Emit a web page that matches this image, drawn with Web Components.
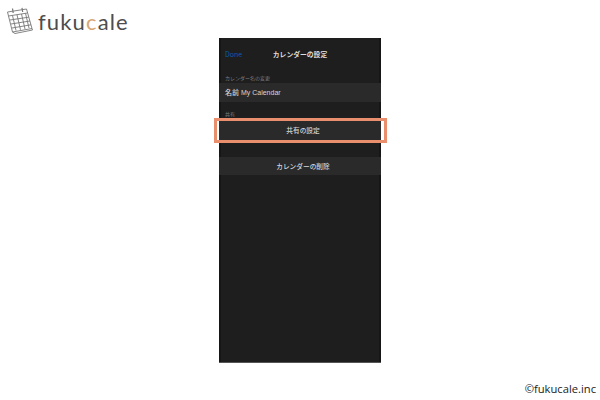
<!DOCTYPE html>
<html><head><meta charset="utf-8">
<style>html,body{margin:0;background:#fff}</style></head>
<body>
<fuku-page>
  <fuku-logo slot="logo"></fuku-logo>
  <phone-screen slot="phone">
    <nav-bar title="カレンダーの設定" action="Done"></nav-bar>
    <sec-label style="margin-top:5px">カレンダー名の変更</sec-label>
    <cell-row align="left" style="margin-top:3px">名前 My Calendar</cell-row>
    <sec-label style="margin-top:9px">共有</sec-label>
    <cell-row style="margin-top:5px" highlight>共有の設定</cell-row>
    <cell-row style="margin-top:17px;height:18px;line-height:18px">カレンダーの削除</cell-row>
  </phone-screen>
  <span slot="copy">©fukucale.inc</span>
</fuku-page>
<script>
function def(name, html){
  customElements.define(name, class extends HTMLElement{
    constructor(){super();this.attachShadow({mode:'open'}).innerHTML=typeof html==='function'?html(this):html;}
  });
}
const JP='"Noto Sans CJK JP","Liberation Sans",sans-serif';
def('fuku-page',`<style>
:host{display:grid;grid-template-columns:1fr 162px 1fr;width:600px;height:400px;overflow:hidden;background:#fff;font-family:"Noto Sans",sans-serif}
.l{padding:6px 0 0 6px}
.p{padding-top:38px}
.c{align-self:end;justify-self:end;padding:0 4px 4px 0;font:11.2px/15px "Open Sans","Noto Sans",sans-serif;color:#222}
</style><div class="l"><slot name="logo"></slot></div><div class="p"><slot name="phone"></slot></div><div class="c"><slot name="copy"></slot></div>`);
def('fuku-logo',`<style>
:host{display:flex;align-items:center;gap:5px;height:28px;color:#4d4d4d;font:400 22px/28px "Lato","Noto Sans",sans-serif;letter-spacing:1.15px;white-space:nowrap}
svg{width:27px;height:27px;flex:none}
span{position:relative;top:2px}
b{font-weight:400;color:#d9a673}
</style><svg viewBox="0 0 27 27" fill="none" stroke="#777" stroke-width=".9">
<path d="M1.5 5 20.5 2 26 21.5 6.5 25Z" fill="#fff"/>
<path d="M6.5 25 9 26.5 26.5 23 26 21.5"/>
<path d="M2.5 9 21.5 6M4 13 22.7 10.2M5 17 24 14M6 21 25 17.8M6.5 8.5 10 23.5M11 7.8 14.5 22.8M15.5 7 19 22M19.5 6.3 23 21"/>
<path d="M6.5 1.5 7.2 6M16 .8 16.7 5" stroke-width="1.2"/>
</svg><span>fuku<b>c</b>ale</span>`);
def('phone-screen',`<style>
:host{display:flex;flex-direction:column;width:162px;height:325px;background:#1e1e1f;border-bottom:1px solid #555;box-sizing:border-box;box-shadow:inset 2px 0 #161617,inset -2px 0 #161617}
</style><slot></slot>`);
def('nav-bar',el=>`<style>
:host{display:flex;align-items:center;position:relative;height:32px;padding-left:6px;font-family:${JP}}
.a{font-size:7px;color:#0b5cab}
.t{position:absolute;left:0;right:0;top:0;line-height:32px;text-align:center;font-size:6.8px;font-weight:700;color:#dedede}
</style><span class="a">${el.getAttribute('action')}</span><span class="t">${el.getAttribute('title')}</span>`);
def('sec-label',`<style>
:host{display:block;height:5px;padding:0 0 0 6px;font:5px/5px ${JP};color:#7d7d7d}
</style><slot></slot>`);
def('cell-row',el=>`<style>
:host{display:block;position:relative;height:19px;background:#2a2a2b;font:500 6.7px/19px ${JP};color:#d6d6d6;text-align:center;padding:0 4px 0 10px;box-sizing:border-box}
:host([align=left]){text-align:left;padding:0 6px;font-size:7px;font-family:"Liberation Sans",${JP}}
.h{position:absolute;left:-5px;right:-6px;top:-3px;bottom:-3px;border:3.5px solid #ea8f6e;box-sizing:border-box}
</style><slot></slot>${el.hasAttribute('highlight')?'<div class="h"></div>':''}`);
</script>
</body></html>
